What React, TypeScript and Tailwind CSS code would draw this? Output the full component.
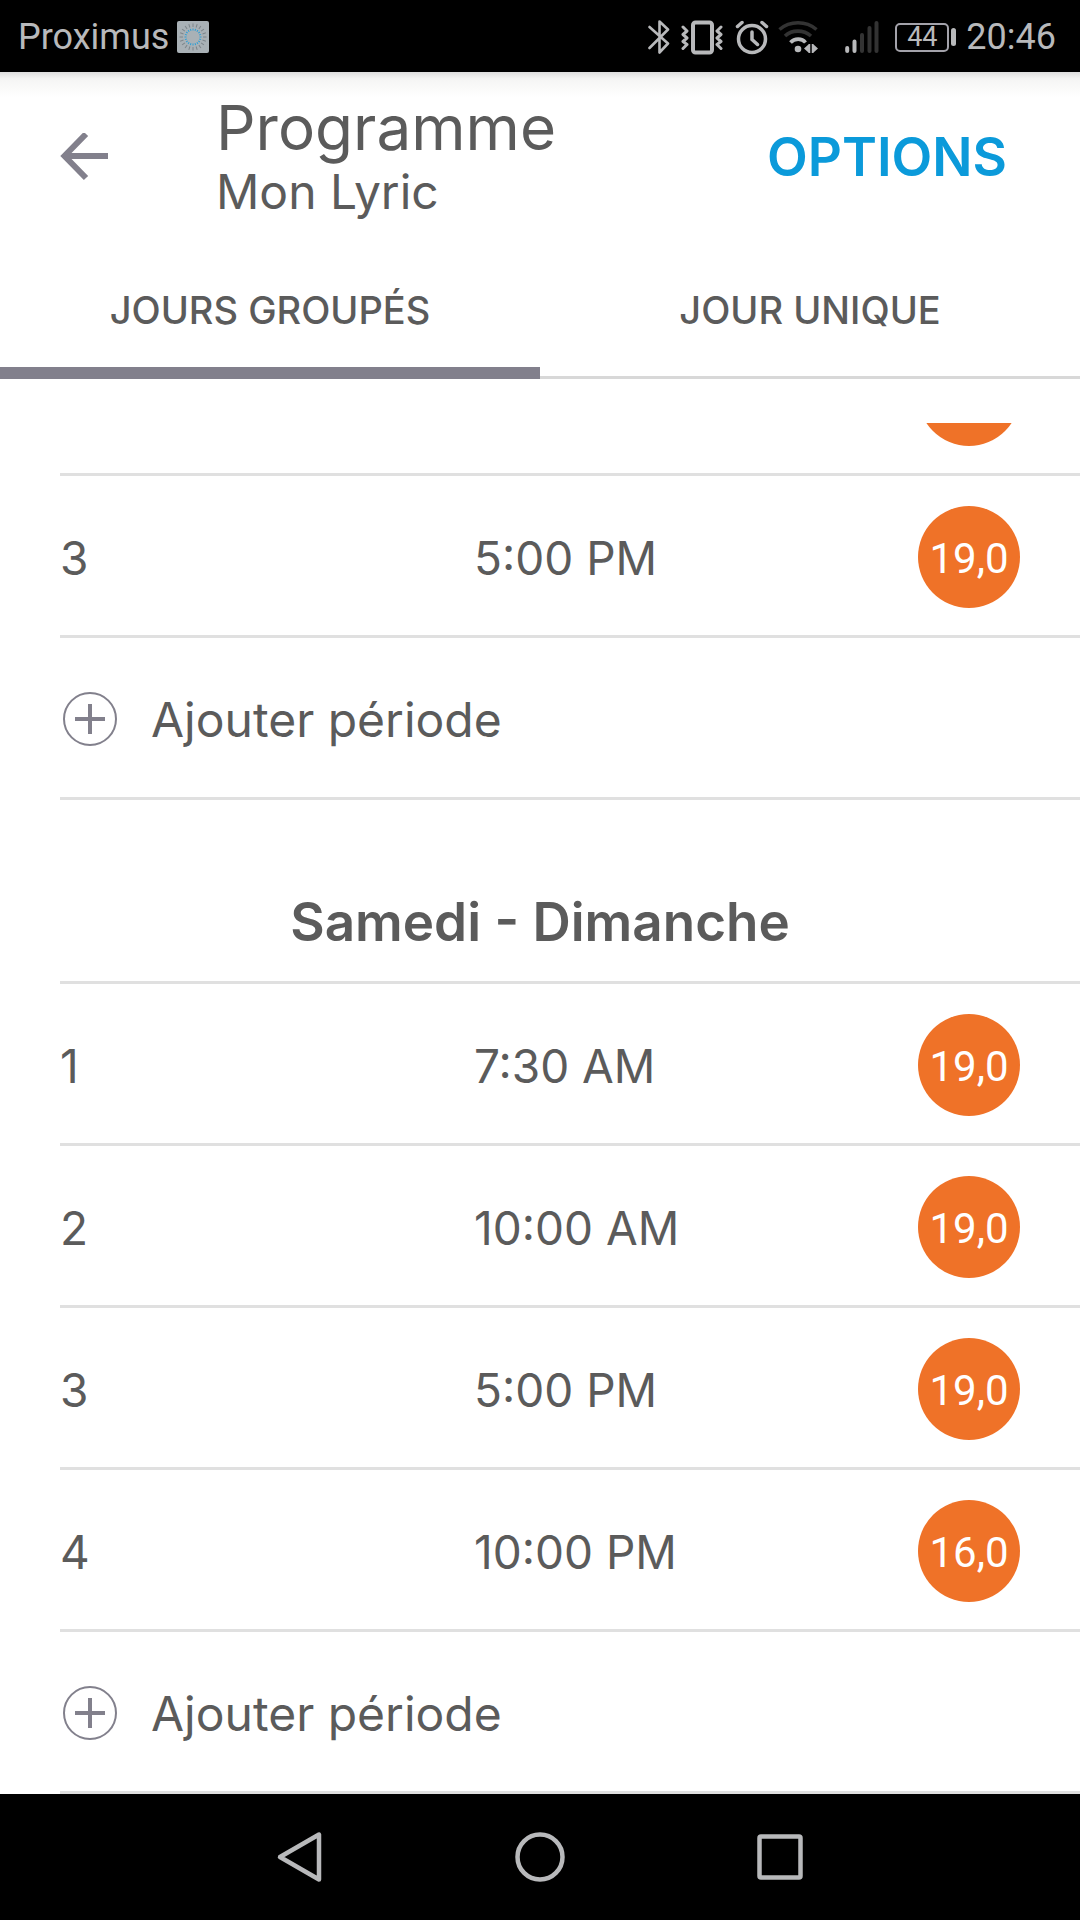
type Period = { id: number; time: string; temp: string }

const weekend: Period[] = [
  { id: 1, time: '7:30 AM', temp: '19,0' },
  { id: 2, time: '10:00 AM', temp: '19,0' },
  { id: 3, time: '5:00 PM', temp: '19,0' },
  { id: 4, time: '10:00 PM', temp: '16,0' },
]

const rays = Array.from({ length: 20 }, (_, i) => i * 18)

const StatusBar = () => {
  return (
    <div className="flex h-[72px] items-center bg-black pl-[18px] pr-6 pt-[2px] font-[Roboto,sans-serif] text-[36px] text-[#b8b9bb]">
      <span>Proximus</span>
      <svg className="ml-2" width="32" height="32" viewBox="0 0 32 32">
        <rect width="32" height="32" rx="2" fill="#a9b1b6" />
        {rays.map((r) => (
          <g key={r} transform={`rotate(${r} 16 16)`}>
            <path d="M16 9.5V7.5" stroke="#2d9fd6" />
            <path d="M16 6V2.5" stroke="#7c848a" />
          </g>
        ))}
      </svg>
      <div className="ml-auto flex items-center">
        {/* bluetooth */}
        <svg width="22" height="36" viewBox="0 0 22 36" fill="none" stroke="currentColor" strokeWidth="2.6" strokeLinejoin="round" strokeLinecap="round">
          <path d="M1.5 8 20 24.5 11.5 33.5V2.5L20 10.5 1.5 29" />
        </svg>
        {/* vibrate */}
        <svg className="ml-[11px]" width="42" height="36" viewBox="0 0 42 36" fill="none" stroke="currentColor" strokeWidth="3">
          <rect x="12" y="3.5" width="19" height="30" rx="2.5" strokeWidth="4" />
          <path strokeLinejoin="round" strokeLinecap="round" d="M2 8l4 4-4 3.5 4 3.5-4 3.5 4 3-4 4M40 8l-4 4 4 3.5-4 3.5 4 3.5-4 3 4 4" />
        </svg>
        {/* alarm */}
        <svg className="ml-3" width="34" height="36" viewBox="0 0 34 36" fill="none" stroke="currentColor" strokeWidth="3.5" strokeLinecap="round">
          <circle cx="17" cy="20" r="13.5" />
          <path d="M17 13v7.5l5.5 5M2.5 7.5 7 3.5M31.5 7.5 27 3.5" />
        </svg>
        {/* wifi */}
        <svg className="ml-[9px]" width="40" height="36" viewBox="0 0 40 36" fill="none" strokeWidth="3.6">
          <path d="M1.5 10.5C12 1.5 28 1.5 38.5 10.5" stroke="#333" />
          <path d="M7 17c7-6.5 18.5-6.5 26 0" stroke="#333" />
          <path d="M12.5 23.5c4-4.5 11.5-4.5 15 0" stroke="currentColor" />
          <circle cx="20" cy="30" r="3.3" fill="currentColor" />
          <path d="M26 29.5l5-4.5v9zM40 29.5l-5-4.5v9z" fill="currentColor" />
          <path d="M31.5 25v9M34.5 25v9" stroke="currentColor" strokeWidth="1.5" />
        </svg>
        {/* signal */}
        <svg className="ml-[27px]" width="34" height="36" viewBox="0 0 34 36" strokeWidth="4" strokeLinecap="round">
          <path d="M2.2 29v3M9.5 22.5V32" stroke="currentColor" />
          <path d="M17 16v16M24.5 9v23M31.5 4v28" stroke="#333" />
        </svg>
        {/* battery */}
        <div className="ml-4 flex h-[29px] w-[54px] items-center justify-center rounded-[5px] border-2 border-[#a3a2aa] text-[27px] leading-none">
          44
        </div>
        <div className="ml-[2px] h-[18px] w-[5px] rounded-full bg-[#b8b9bb]" />
        <span className="ml-[10px]">20:46</span>
      </div>
    </div>
  )
}

const Header = () => {
  return (
    <header className="flex h-[170px] items-center bg-linear-to-b from-[#dedede] via-[#f5f5f4] via-4% to-white to-15% pl-[60px] pr-[73px] pt-[2px]">
      <button aria-label="Retour">
        <svg width="48" height="50" viewBox="0 0 48 50" fill="none" stroke="#82808c" strokeWidth="6">
          <path d="M48 23H5M26 1 4.5 23 26 45" />
        </svg>
      </button>
      <div className="ml-[108px]">
        <h1 className="text-[62px] leading-[68px]">Programme</h1>
        <p className="text-[48px] leading-[60px]">Mon Lyric</p>
      </div>
      <button className="ml-auto text-[53px] font-semibold text-[#0b9ada]">OPTIONS</button>
    </header>
  )
}

const Tabs = () => {
  return (
    <div role="tablist" className="grid h-[137px] grid-cols-2 text-[38px] font-medium">
      <button role="tab" aria-selected="true" className="border-b-12 border-[#82808c] pt-3">
        JOURS GROUPÉS
      </button>
      <button role="tab" aria-selected="false" className="border-b-3 border-[#d8d8d8] pt-[3px]">
        JOUR UNIQUE
      </button>
    </div>
  )
}

const Badge = ({ temp }: { temp?: string }) => {
  return (
    <div className="flex size-[102px] shrink-0 items-center justify-center rounded-full bg-[#ef7228] pt-[2px] font-[Roboto,sans-serif] text-[42px] text-white">
      {temp}
    </div>
  )
}

const PeriodRow = ({ period }: { period: Period }) => {
  return (
    <li className="flex h-[162px] items-center border-b-3 border-[#e0e0e0] pr-[60px] pt-[3px]">
      <span className="w-[414px] pt-[2px]">{period.id}</span>
      <span className="flex-1 pt-[2px]">{period.time}</span>
      <Badge temp={period.temp} />
    </li>
  )
}

const AddRow = () => {
  return (
    <li className="h-[162px] border-b-3 border-[#e0e0e0] pt-[3px]">
      <button className="flex h-full w-full items-center gap-[34px] pl-[3px] text-[48px]">
        <svg width="54" height="54" viewBox="0 0 54 54" fill="none" stroke="#82808c">
          <circle cx="27" cy="27" r="26" strokeWidth="2" />
          <path d="M27 12v30M12 27h30" strokeWidth="4" />
        </svg>
        <span className="pt-[2px]">Ajouter période</span>
      </button>
    </li>
  )
}

const NavBar = () => {
  return (
    <nav className="bg-black">
      <div className="mx-auto grid h-[126px] w-2/3 grid-cols-3 place-items-center">
        <button aria-label="Précédent">
          <svg width="50" height="52" viewBox="0 0 50 52" fill="none" stroke="#b8b9bb" strokeWidth="4.5" strokeLinejoin="round">
            <path d="M44 3.5v45L5 26z" />
          </svg>
        </button>
        <button aria-label="Accueil">
          <svg width="50" height="50" viewBox="0 0 50 50" fill="none" stroke="#b8b9bb" strokeWidth="4.5">
            <circle cx="25" cy="25" r="22.5" />
          </svg>
        </button>
        <button aria-label="Applications récentes">
          <svg width="46" height="46" viewBox="0 0 46 46" fill="none" stroke="#b8b9bb" strokeWidth="4.5">
            <rect x="2.5" y="2.5" width="41" height="41" rx="1.5" />
          </svg>
        </button>
      </div>
    </nav>
  )
}

export default function App() {
  return (
    <div className="bg-white font-[Inter,sans-serif] text-[#5b5b5b]">
      <StatusBar />
      <Header />
      <Tabs />
      <main className="mt-11 pl-[60px] text-[46px]">
        {/* row scrolled under the tabs */}
        <div className="flex h-[53px] items-end justify-end overflow-hidden border-b-3 border-[#e0e0e0] pb-[27px] pr-[60px]">
          <Badge />
        </div>
        <ul>
          <PeriodRow period={{ id: 3, time: '5:00 PM', temp: '19,0' }} />
          <AddRow />
        </ul>
        <h2 className="flex h-[184px] items-center justify-center border-b-3 border-[#e0e0e0] pr-[60px] pt-[65px] text-[53px] font-semibold">
          Samedi - Dimanche
        </h2>
        <ul>
          {weekend.map((p) => (
            <PeriodRow key={p.id} period={p} />
          ))}
          <AddRow />
        </ul>
      </main>
      <NavBar />
    </div>
  )
}
